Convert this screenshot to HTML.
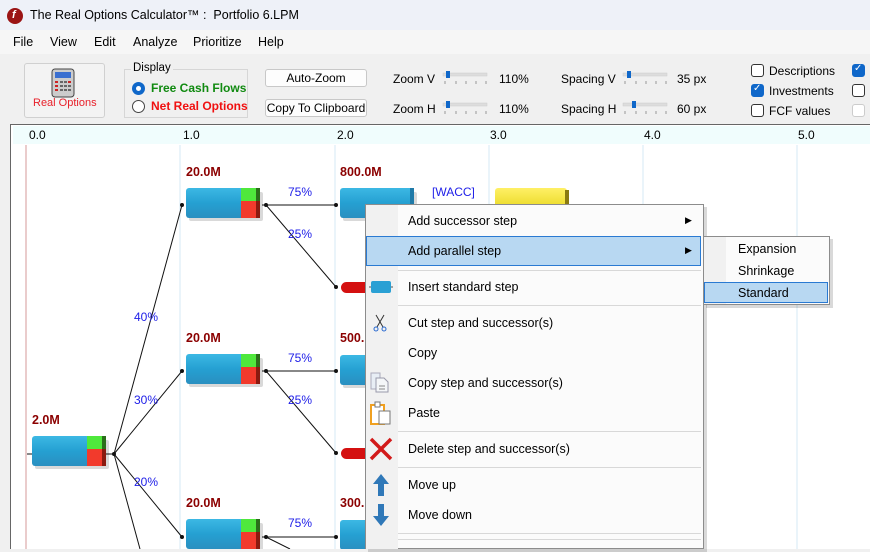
<!DOCTYPE html>
<html><head><meta charset="utf-8"><style>
*{margin:0;padding:0;box-sizing:border-box}
body{width:870px;height:549px;overflow:hidden;position:relative;font-family:"Liberation Sans",sans-serif;background:#f0f0f0;color:#000}
.a{position:absolute;white-space:nowrap}
.t12{font-size:12px}
.btn{position:absolute;background:#fdfdfd;border:1px solid #c8c8c8;border-radius:3px;font-size:12px;text-align:center}
.cb{position:absolute;width:13px;height:13px;border:1px solid #333;border-radius:3px;background:#fff}
.cbk{background:#0f67c9;border-color:#0f67c9}
.mi{position:absolute;left:408px;font-size:12.5px}
.sep{position:absolute;left:398px;width:303px;height:1px;background:#d8d8d8}
</style></head><body>
<!-- title bar -->
<div class="a" style="left:0;top:0;width:870px;height:30px;background:#eef1f8"></div>
<div class="a" style="left:7px;top:8px;width:16px;height:16px;border-radius:50%;background:#9b1414"></div>
<div class="a" style="left:12px;top:9px;color:#fff;font-size:11px;font-weight:bold;font-style:italic">f</div>
<div class="a" style="left:30px;top:8px;font-size:12.5px">The Real Options Calculator™ :&nbsp; Portfolio 6.LPM</div>
<!-- menubar -->
<div class="a" style="left:0;top:30px;width:870px;height:24px;background:#f6f6f6"></div>
<div class="a t12" style="left:13px;top:35px;font-size:12.5px">File</div>
<div class="a t12" style="left:50px;top:35px;font-size:12.5px">View</div>
<div class="a t12" style="left:94px;top:35px;font-size:12.5px">Edit</div>
<div class="a t12" style="left:133px;top:35px;font-size:12.5px">Analyze</div>
<div class="a t12" style="left:193px;top:35px;font-size:12.5px">Prioritize</div>
<div class="a t12" style="left:258px;top:35px;font-size:12.5px">Help</div>
<!-- toolbar -->
<div class="a" style="left:24px;top:63px;width:81px;height:55px;border:1px solid #d0d0d0;border-radius:3px;background:#f3f3f3"></div>
<svg class="a" style="left:51px;top:68px" width="24" height="30"><rect x="1" y="1" width="22" height="28" rx="3" fill="#ccc" stroke="#444"/><rect x="4" y="4" width="16" height="6" fill="#3a6fd0"/><g fill="#c22"><rect x="4" y="13" width="3" height="2"/><rect x="17" y="13" width="3" height="2"/><rect x="4" y="17" width="3" height="2"/><rect x="4" y="21" width="3" height="2"/></g><g fill="#666"><rect x="9" y="13" width="3" height="2"/><rect x="13" y="13" width="3" height="2"/><rect x="9" y="17" width="3" height="2"/><rect x="13" y="17" width="3" height="2"/><rect x="17" y="17" width="3" height="2"/><rect x="9" y="21" width="3" height="2"/><rect x="13" y="21" width="3" height="2"/><rect x="17" y="21" width="3" height="2"/></g></svg>
<div class="a" style="left:33px;top:97px;font-size:11px;color:#e8202a">Real Options</div>
<div class="a" style="left:124px;top:69px;width:124px;height:49px;border:1px solid #d6d6d6"></div>
<div class="a" style="left:131px;top:62px;font-size:11.5px;background:#f0f0f0;padding:0 2px">Display</div>
<div class="a" style="left:132px;top:82px;width:13px;height:13px;border-radius:50%;background:#0f67c9"></div>
<div class="a" style="left:136px;top:86px;width:5px;height:5px;border-radius:50%;background:#fff"></div>
<div class="a" style="left:151px;top:81px;font-size:12px;font-weight:bold;color:#108a10">Free Cash Flows</div>
<div class="a" style="left:132px;top:100px;width:13px;height:13px;border-radius:50%;border:1px solid #444;background:#fff"></div>
<div class="a" style="left:151px;top:99px;font-size:12px;font-weight:bold;color:#f01010">Net Real Options</div>
<div class="btn" style="left:265px;top:69px;width:102px;height:18px;line-height:16px">Auto-Zoom</div>
<div class="btn" style="left:265px;top:99px;width:102px;height:18px;line-height:16px">Copy To Clipboard</div>
<div class="a t12" style="left:393px;top:72px">Zoom V</div>
<div class="a t12" style="left:393px;top:102px">Zoom H</div>
<div class="a t12" style="left:499px;top:72px">110%</div>
<div class="a t12" style="left:499px;top:102px">110%</div>
<div class="a t12" style="left:561px;top:72px">Spacing V</div>
<div class="a t12" style="left:561px;top:102px">Spacing H</div>
<div class="a t12" style="left:677px;top:72px">35 px</div>
<div class="a t12" style="left:677px;top:102px">60 px</div>
<svg class="a" style="left:440px;top:70px" width="270" height="48">
<g><rect x="3" y="3" width="44" height="3" fill="#ddd" stroke="#ccc" stroke-width=".5"/><rect x="6" y="1" width="4" height="7" fill="#0f67c9"/><g stroke="#999"><path d="M5 11v3M16 11v3M26 11v3M36 11v3M46 11v3"/></g></g>
<g transform="translate(0,30)"><rect x="3" y="3" width="44" height="3" fill="#ddd" stroke="#ccc" stroke-width=".5"/><rect x="6" y="1" width="4" height="7" fill="#0f67c9"/><g stroke="#999"><path d="M5 11v3M16 11v3M26 11v3M36 11v3M46 11v3"/></g></g>
<g transform="translate(180,0)"><rect x="3" y="3" width="44" height="3" fill="#ddd" stroke="#ccc" stroke-width=".5"/><rect x="7" y="1" width="4" height="7" fill="#0f67c9"/><g stroke="#999"><path d="M5 11v3M16 11v3M26 11v3M36 11v3M46 11v3"/></g></g>
<g transform="translate(180,30)"><rect x="3" y="3" width="44" height="3" fill="#ddd" stroke="#ccc" stroke-width=".5"/><rect x="12" y="1" width="4" height="7" fill="#0f67c9"/><g stroke="#999"><path d="M5 11v3M16 11v3M26 11v3M36 11v3M46 11v3"/></g></g>
</svg>
<div class="cb" style="left:751px;top:64px"></div><div class="a t12" style="left:769px;top:64px">Descriptions</div>
<div class="cb cbk" style="left:751px;top:84px"></div><div class="a" style="left:753px;top:83px;color:#fff;font-size:10px">✓</div><div class="a t12" style="left:769px;top:84px">Investments</div>
<div class="cb" style="left:751px;top:104px"></div><div class="a t12" style="left:769px;top:104px">FCF values</div>
<div class="cb cbk" style="left:852px;top:64px"></div><div class="a" style="left:854px;top:63px;color:#fff;font-size:10px">✓</div>
<div class="cb" style="left:852px;top:84px"></div>
<div class="cb" style="left:852px;top:104px;border-color:#ccc"></div>
<!-- canvas -->
<div class="a" style="left:10px;top:124px;width:860px;height:425px;background:#fff;border-left:1px solid #666;border-top:1px solid #666"></div>
<div class="a" style="left:13px;top:126px;width:857px;height:18px;background:#f0fdfd"></div>
<div class="a t12" style="left:29px;top:128px">0.0</div>
<div class="a t12" style="left:183px;top:128px">1.0</div>
<div class="a t12" style="left:337px;top:128px">2.0</div>
<div class="a t12" style="left:490px;top:128px">3.0</div>
<div class="a t12" style="left:644px;top:128px">4.0</div>
<div class="a t12" style="left:798px;top:128px">5.0</div>
<svg class="a" style="left:0;top:0" width="870" height="549">
<defs>
<linearGradient id="bl" x1="0" y1="0" x2="0" y2="1"><stop offset="0" stop-color="#3cb8e4"/><stop offset=".5" stop-color="#25a0d2"/><stop offset="1" stop-color="#2a8fc0"/></linearGradient>
<linearGradient id="ye" x1="0" y1="0" x2="0" y2="1"><stop offset="0" stop-color="#fff066"/><stop offset="1" stop-color="#e8d820"/></linearGradient>
<g id="nb"><rect x="3" y="4" width="74" height="29" rx="2" fill="#000" opacity=".15"/><rect x="0" y="0" width="74" height="30" rx="3" fill="url(#bl)"/><rect x="55" y="0" width="15" height="13" fill="#4fe83c"/><rect x="55" y="13" width="15" height="17" fill="#f23a2c"/><rect x="70" y="0" width="4" height="13" fill="#2b6e1a"/><rect x="70" y="13" width="4" height="17" fill="#8a1a10"/></g>
<g id="bb"><rect x="3" y="4" width="74" height="29" rx="2" fill="#000" opacity=".15"/><rect x="0" y="0" width="74" height="30" rx="3" fill="url(#bl)"/><rect x="70" y="0" width="4" height="30" fill="#1f7aa8"/></g>
</defs>
<line x1="26" y1="145" x2="26" y2="549" stroke="#d49a9a"/>
<g stroke="#d4e8f4"><line x1="180" y1="145" x2="180" y2="549"/><line x1="335" y1="145" x2="335" y2="549"/><line x1="489" y1="145" x2="489" y2="549"/><line x1="643" y1="145" x2="643" y2="549"/><line x1="797" y1="145" x2="797" y2="549"/></g>
<g stroke="#111" stroke-width="1" fill="none">
<path d="M27 454h8M106 454h8"/>
<path d="M114 454L182 205M114 454L182 371M114 454L182 537M114 454L140 549"/>
<path d="M262 205h74M266 205L336 287M262 371h74M266 371L336 453M262 537h74M266 537L290 549"/>
</g>
<g fill="#111"><circle cx="114" cy="454" r="2"/><circle cx="182" cy="205" r="2"/><circle cx="182" cy="371" r="2"/><circle cx="182" cy="537" r="2"/><circle cx="266" cy="205" r="2"/><circle cx="266" cy="371" r="2"/><circle cx="266" cy="537" r="2"/><circle cx="336" cy="205" r="2"/><circle cx="336" cy="287" r="2"/><circle cx="336" cy="371" r="2"/><circle cx="336" cy="453" r="2"/><circle cx="336" cy="537" r="2"/></g>
<use href="#nb" x="32" y="436"/>
<use href="#nb" x="186" y="188"/>
<use href="#nb" x="186" y="354"/>
<use href="#nb" x="186" y="519"/>
<use href="#bb" x="340" y="188"/>
<use href="#bb" x="340" y="355"/>
<use href="#bb" x="340" y="520"/>
<rect x="495" y="188" width="72" height="22" rx="3" fill="url(#ye)"/><rect x="565" y="190" width="4" height="20" fill="#8a7a10"/>
<rect x="341" y="282" width="30" height="11" rx="5.5" fill="#d41010"/>
<rect x="341" y="448" width="30" height="11" rx="5.5" fill="#d41010"/>
<g font-family="Liberation Sans" font-size="12" fill="#2020e8"><text x="288" y="196">75%</text><text x="288" y="238">25%</text><text x="288" y="362">75%</text><text x="288" y="404">25%</text><text x="288" y="527">75%</text><text x="134" y="321">40%</text><text x="134" y="404">30%</text><text x="134" y="486">20%</text><text x="432" y="196">[WACC]</text></g>
<g font-family="Liberation Sans" font-size="12.5" font-weight="bold" fill="#8b0000"><text x="186" y="176">20.0M</text><text x="340" y="176">800.0M</text><text x="186" y="342">20.0M</text><text x="340" y="342">500.</text><text x="186" y="507">20.0M</text><text x="340" y="507">300.</text><text x="32" y="424">2.0M</text></g>
</svg>
<!-- context menu -->
<div class="a" style="left:368px;top:207px;width:339px;height:345px;background:#000;opacity:.15"></div>
<div class="a" style="left:365px;top:204px;width:339px;height:345px;background:#fbfbfb;border:1px solid #8c8c8c"></div>
<div class="a" style="left:366px;top:205px;width:32px;height:344px;background:#f1f1f1"></div>
<div class="a" style="left:366px;top:236px;width:335px;height:30px;background:#b8d8f2;border:1px solid #2a7ad2"></div>
<div class="mi" style="top:214px">Add successor step</div>
<div class="a" style="left:685px;top:215px;font-size:9px">▶</div>
<div class="mi" style="top:244px">Add parallel step</div>
<div class="a" style="left:685px;top:245px;font-size:9px">▶</div>
<div class="sep" style="top:270px"></div>
<svg class="a" style="left:369px;top:279px" width="24" height="16"><rect x="2" y="2" width="20" height="12" rx="2" fill="#2aa0d4"/><path d="M0 8h2M22 8h2" stroke="#555"/></svg>
<div class="mi" style="top:280px">Insert standard step</div>
<div class="sep" style="top:305px"></div>
<svg class="a" style="left:373px;top:314px" width="14" height="18"><path d="M3 1l7 12M11 1L4 13" stroke="#333" fill="none"/><circle cx="3" cy="15" r="2" fill="none" stroke="#2a6ad0"/><circle cx="11" cy="15" r="2" fill="none" stroke="#2a6ad0"/></svg>
<div class="mi" style="top:316px">Cut step and successor(s)</div>
<div class="mi" style="top:346px">Copy</div>
<svg class="a" style="left:369px;top:371px" width="22" height="22"><path d="M2 2h9l0 16H2z" fill="#e8eef5" stroke="#aab"/><path d="M7 7h8l4 4v10H7z" fill="#f4f6f8" stroke="#99a"/><path d="M10 15h6M10 18h6" stroke="#888"/></svg>
<div class="mi" style="top:376px">Copy step and successor(s)</div>
<svg class="a" style="left:370px;top:401px" width="22" height="24"><path d="M1 4h13v19H1z" fill="#fff" stroke="#f0a020" stroke-width="2"/><rect x="5" y="1" width="5" height="5" fill="#fff" stroke="#777"/><path d="M9 10h11v13H9z" fill="#fff" stroke="#777"/></svg>
<div class="mi" style="top:406px">Paste</div>
<div class="sep" style="top:431px"></div>
<svg class="a" style="left:369px;top:437px" width="24" height="24"><path d="M2 2L22 22M22 2L2 22" stroke="#d21a1a" stroke-width="3.5"/></svg>
<div class="mi" style="top:442px">Delete step and successor(s)</div>
<div class="sep" style="top:467px"></div>
<svg class="a" style="left:371px;top:473px" width="20" height="24"><path d="M10 1L18 11H13V23H7V11H2z" fill="#2f78b8"/></svg>
<div class="mi" style="top:478px">Move up</div>
<svg class="a" style="left:371px;top:503px" width="20" height="24"><path d="M10 23L18 13H13V1H7V13H2z" fill="#2f78b8"/></svg>
<div class="mi" style="top:508px">Move down</div>
<div class="sep" style="top:533px"></div>
<div class="sep" style="top:539px"></div>
<!-- submenu -->
<div class="a" style="left:706px;top:239px;width:127px;height:69px;background:#000;opacity:.15"></div>
<div class="a" style="left:703px;top:236px;width:127px;height:69px;background:#fbfbfb;border:1px solid #8c8c8c"></div>
<div class="a" style="left:704px;top:237px;width:22px;height:67px;background:#f1f1f1"></div>
<div class="a" style="left:704px;top:282px;width:124px;height:21px;background:#b8d8f2;border:1px solid #2a7ad2"></div>
<div class="a" style="left:738px;top:242px;font-size:12.5px">Expansion</div>
<div class="a" style="left:738px;top:264px;font-size:12.5px">Shrinkage</div>
<div class="a" style="left:738px;top:286px;font-size:12.5px">Standard</div>
</body></html>
